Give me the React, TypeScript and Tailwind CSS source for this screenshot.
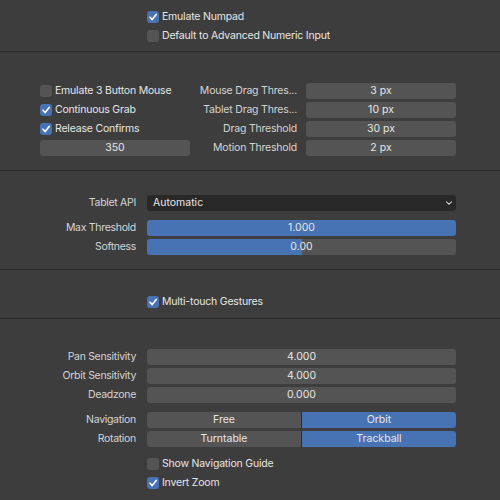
import React from "react";

const font = { fontFamily: "Inter, 'Noto Sans', 'DejaVu Sans', sans-serif" };

function Check({ on, label }: { on?: boolean; label: string }) {
  return (
    <div className="flex h-4 items-center gap-[3px]">
      <div
        className={`flex h-[12px] w-[12px] items-center justify-center rounded-[3px] ${
          on ? "bg-[#4772b3]" : "bg-[#545454]"
        }`}
      >
        {on && (
          <svg width="10" height="10" viewBox="0 0 10 10">
            <path d="M2 5.2 L4.2 7.6 L8.2 2.4" fill="none" stroke="#fff" strokeWidth="1.6" strokeLinecap="round" strokeLinejoin="round" />
          </svg>
        )}
      </div>
      <span className="-mt-px text-[10.5px] leading-4 tracking-[-0.2px] text-[#e6e6e6]">{label}</span>
    </div>
  );
}

function Field({ value, className = "" }: { value: string; className?: string }) {
  return (
    <div className={`flex h-4 items-center justify-center rounded-[3px] bg-[#545454] text-[10.5px] text-[#e6e6e6] ${className}`}>
      {value}
    </div>
  );
}

function Slider({ value, fill }: { value: string; fill: number }) {
  return (
    <div className="relative h-4 w-[309px] overflow-hidden rounded-[3px] bg-[#545454]">
      <div className="h-full bg-[#4772b3]" style={{ width: `${fill * 100}%` }} />
      <span className="absolute inset-0 flex items-center justify-center text-[10.5px] text-[#e6e6e6]">{value}</span>
    </div>
  );
}

function Row({ label, children }: { label: string; children: React.ReactNode }) {
  return (
    <div className="flex h-4 items-center">
      <div className="w-[137px] pr-[1px] text-right text-[10.5px] leading-4 tracking-[-0.3px] text-[#d4d4d4]">{label}</div>
      <div className="ml-[10px]">{children}</div>
    </div>
  );
}

function Toggle({ options, active }: { options: string[]; active: number }) {
  return (
    <div className="flex h-4 w-[309px] gap-[1px] overflow-hidden rounded-[3px] bg-[#2a2a2a]">
      {options.map((o, i) => (
        <div
          key={o}
          className={`flex flex-1 items-center justify-center text-[10.5px] text-[#e6e6e6] ${
            i === active ? "bg-[#4772b3]" : "bg-[#545454]"
          }`}
        >
          {o}
        </div>
      ))}
    </div>
  );
}

const Divider = () => <div className="h-px bg-[#2b2b2b]" />;

export default function App() {
  return (
    <div className="h-[500px] w-[500px] overflow-hidden bg-[#3d3d3d]" style={font}>
      {/* Keyboard */}
      <div className="flex flex-col gap-[3px] pb-[7px] pl-[147px] pt-[9px]">
        <Check on label="Emulate Numpad" />
        <Check label="Default to Advanced Numeric Input" />
      </div>
      <Divider />

      {/* Mouse */}
      <div className="flex pb-[14px] pl-[40px] pt-[31px]">
        <div className="flex w-[150px] flex-col gap-[3px]">
          <Check label="Emulate 3 Button Mouse" />
          <Check on label="Continuous Grab" />
          <Check on label="Release Confirms" />
          <Field value="350" className="w-[150px]" />
        </div>
        <div className="flex flex-col gap-[3px]">
          {[
            ["Mouse Drag Thres...", "3 px"],
            ["Tablet Drag Thres...", "10 px"],
            ["Drag Threshold", "30 px"],
            ["Motion Threshold", "2 px"],
          ].map(([l, v]) => (
            <div key={l} className="flex h-4 items-center">
              <div className="w-[107px] text-right text-[10.5px] leading-4 tracking-[-0.2px] text-[#d4d4d4]">{l}</div>
              <Field value={v} className="ml-[9px] w-[150px]" />
            </div>
          ))}
        </div>
      </div>
      <Divider />

      {/* Tablet */}
      <div className="flex flex-col pb-[14px] pt-[24px]">
        <Row label="Tablet API">
          <div className="flex h-4 w-[309px] items-center justify-between rounded-[3px] bg-[#282828] pl-[6px] pr-[3px] text-[10.5px] text-[#e6e6e6]">
            <span>Automatic</span>
            <svg width="8" height="8" viewBox="0 0 8 8">
              <path d="M1.5 2.8 L4 5.2 L6.5 2.8" fill="none" stroke="#d0d0d0" strokeWidth="1.1" strokeLinecap="round" />
            </svg>
          </div>
        </Row>
        <div className="mt-[9px] flex flex-col gap-[3px]">
          <Row label="Max Threshold">
            <Slider value="1.000" fill={1} />
          </Row>
          <Row label="Softness">
            <Slider value="0.00" fill={0.5} />
          </Row>
        </div>
      </div>
      <Divider />

      {/* Touch */}
      <div className="pb-[8px] pl-[147px] pt-[24px]">
        <Check on label="Multi-touch Gestures" />
      </div>
      <Divider />

      {/* NDOF */}
      <div className="flex flex-col pt-[30px]">
        <div className="flex flex-col gap-[3px]">
          <Row label="Pan Sensitivity">
            <Field value="4.000" className="w-[309px]" />
          </Row>
          <Row label="Orbit Sensitivity">
            <Field value="4.000" className="w-[309px]" />
          </Row>
          <Row label="Deadzone">
            <Field value="0.000" className="w-[309px]" />
          </Row>
        </div>
        <div className="mt-[9px] flex flex-col gap-[3px]">
          <Row label="Navigation">
            <Toggle options={["Free", "Orbit"]} active={1} />
          </Row>
          <Row label="Rotation">
            <Toggle options={["Turntable", "Trackball"]} active={1} />
          </Row>
        </div>
        <div className="mt-[9px] flex flex-col gap-[3px] pl-[147px]">
          <Check label="Show Navigation Guide" />
          <Check on label="Invert Zoom" />
        </div>
      </div>
    </div>
  );
}
